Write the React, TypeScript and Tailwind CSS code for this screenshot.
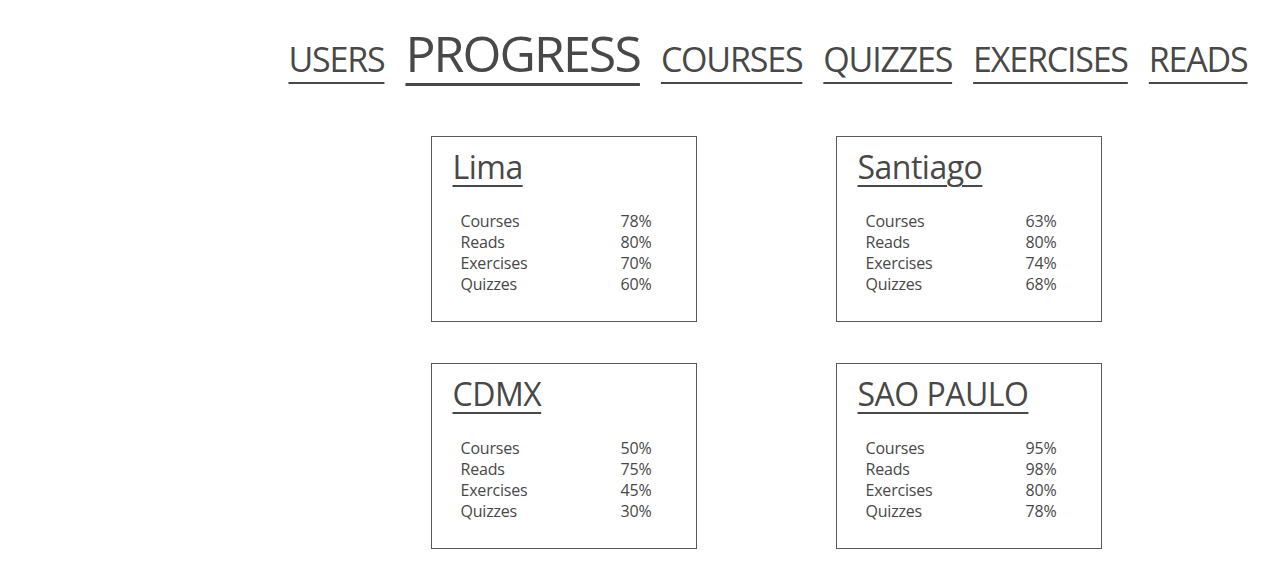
const tabs = [
  { label: "USERS", active: false },
  { label: "PROGRESS", active: true },
  { label: "COURSES", active: false },
  { label: "QUIZZES", active: false },
  { label: "EXERCISES", active: false },
  { label: "READS", active: false },
];

const cities = [
  { name: "Lima", stats: [["Courses", 78], ["Reads", 80], ["Exercises", 70], ["Quizzes", 60]] },
  { name: "Santiago", stats: [["Courses", 63], ["Reads", 80], ["Exercises", 74], ["Quizzes", 68]] },
  { name: "CDMX", stats: [["Courses", 50], ["Reads", 75], ["Exercises", 45], ["Quizzes", 30]] },
  { name: "SAO PAULO", stats: [["Courses", 95], ["Reads", 98], ["Exercises", 80], ["Quizzes", 78]] },
] as const;

function CityCard({ name, stats }: { name: string; stats: readonly (readonly [string, number])[] }) {
  return (
    <div className="h-[186px] w-[266px] border border-[#5a5a5a] px-[21px] pt-[8px]">
      <h2 className="text-[32px] leading-[44px] tracking-[-0.5px] underline decoration-2 underline-offset-[6px]">
        {name}
      </h2>
      <dl className="mt-[22px] pl-[8px] text-[16px] leading-[21px] tracking-[-0.2px]">
        {stats.map(([label, value]) => (
          <div key={label} className="flex">
            <dt className="w-[160px]">{label}</dt>
            <dd>{value}%</dd>
          </div>
        ))}
      </dl>
    </div>
  );
}

export default function App() {
  return (
    <div className="flex min-h-[566px] bg-white font-['Open_Sans',sans-serif] text-[#484848]">
      <aside className="w-64 shrink-0" />
      <main className="flex flex-1 flex-col items-center">
        <nav className="mt-[23px] flex items-baseline gap-[21px]">
          {tabs.map((t) => (
            <a
              key={t.label}
              href="#"
              className={
                t.active
                  ? "text-[50px] leading-[60px] tracking-[-1.9px] underline decoration-[3px] underline-offset-[11px]"
                  : "text-[34px] leading-[44px] tracking-[-1.2px] underline decoration-2 underline-offset-[10px]"
              }
            >
              {t.label}
            </a>
          ))}
        </nav>
        <section className="mt-[53px] mr-[4px] grid grid-cols-2 gap-x-[139px] gap-y-[41px]">
          {cities.map((c) => (
            <CityCard key={c.name} name={c.name} stats={c.stats} />
          ))}
        </section>
      </main>
    </div>
  );
}
